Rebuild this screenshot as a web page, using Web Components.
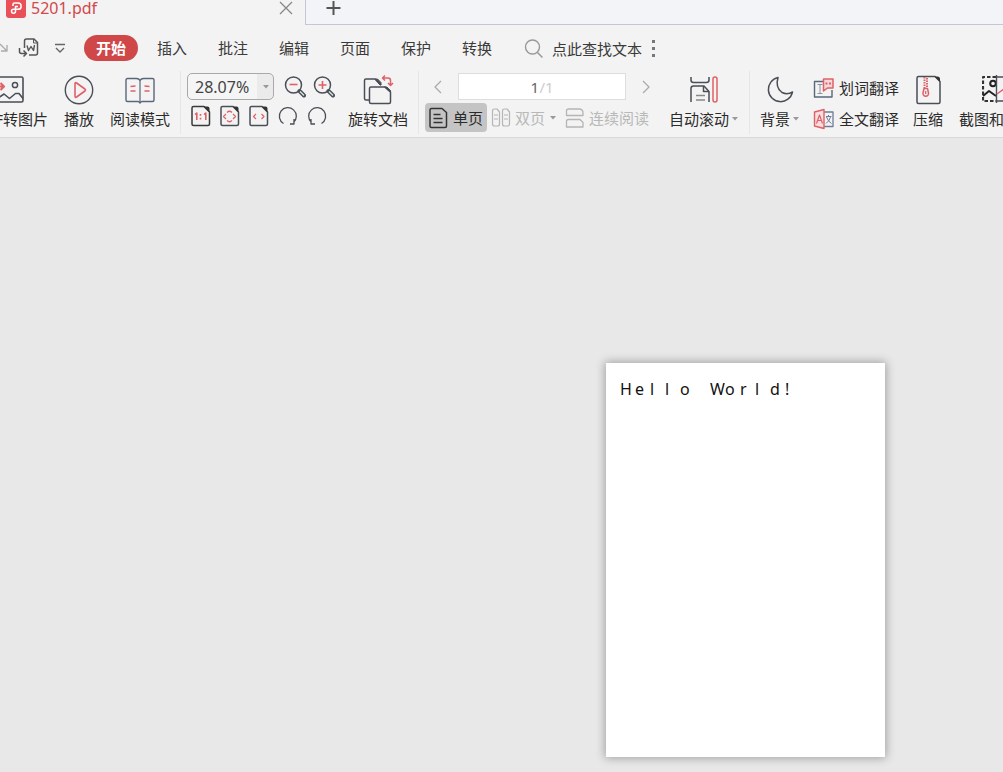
<!DOCTYPE html>
<html lang="zh-CN">
<head>
<meta charset="utf-8">
<title>5201.pdf</title>
<style>
  html, body { margin: 0; height: 100%; }
  body { font: 15px/20px "Noto Sans", "Noto Sans CJK SC", sans-serif; color: #2b2b2b; background: #e8e8e8; overflow: hidden; }
</style>
</head>
<body>
<pdf-app></pdf-app>
<script>
const INK = '#4a4f57', RED = '#df6168';
const page = (body, ink = INK) => [22, 22, `<path d="M2 3q0-1.500 1.500-1.500H14L19.500 7v12q0 1.500-1.500 1.500H3.500Q2 20.500 2 19z" stroke="${ink}" stroke-width="1.500"/><path d="M13.500 1.500h4q2 0 2 2V7.500z" fill="#333" stroke="none"/>${body}`];
const ICONS = {
  logo: [20, 20, `<rect width="20" height="20" rx="3" fill="#ea5057" stroke="none"/><path d="M7 8V6.500q0-1.500 1.500-1.500H12a3 3 0 0 1 0 6.300H7.500a2 2 0 1 0 2 2V8.500h2.500" stroke="#fff" stroke-width="1.500"/>`],
  close: [14, 14, `<path d="M1 1l12 12M13 1L1 13" stroke="#888" stroke-width="1.300"/>`],
  plus: [16, 16, `<path d="M7.500 1v14M.5 8h14" stroke="#555" stroke-width="2"/>`],
  share: [10, 12, `<path d="M0 2l7 7M7 3v6H1" stroke="#aaa" stroke-width="1.300"/>`],
  word: [22, 22, `<path d="M6.500 11V4q0-2 2-2H16l3.500 3.500V16q0 2-2 2H11" stroke="#555" stroke-width="1.500"/><path d="M15.500 2v4h4" stroke="#555"/><path d="M9 8.500l1.500 5 2.500-4 2.500 4L16.500 8" stroke="#555" stroke-width="1.400"/><path d="M1.500 11v3.500q0 2 2 2H8M5.500 13.500l3 3-3 3" stroke="#555" stroke-width="1.500"/>`],
  more: [12, 12, `<path d="M1 2.500h10M2 6l4 4 4-4" stroke="#666" stroke-width="1.400"/>`],
  search: [20, 20, `<circle cx="8.500" cy="8" r="7" stroke="#999" stroke-width="1.400"/><path d="M13.500 13.500l5 5" stroke="#999" stroke-width="1.500"/>`],
  dots: [4, 18, `<path d="M0 1h3v3H0zM0 8h3v3H0zM0 15h3v3H0z" fill="#777" stroke="none"/>`],
  caret: [8, 4, `<path d="M1 0h6L4 3.500z" fill="#999" stroke="none"/>`],
  image: [30, 30, `<rect x="1" y="2" width="25" height="25" rx="1.500" stroke-width="1.600"/><circle cx="18" cy="10" r="2.600" stroke-width="1.500"/><path d="M1 23l6-4 5.500 4.500 6-5 3.500 0 4 5" stroke-width="1.600"/><path d="M1 11.500h6M3.500 8l3.500 3.500L3.500 15" stroke="${RED}" stroke-width="2"/>`],
  play: [30, 30, `<circle cx="15" cy="15" r="13.700" stroke-width="1.400"/><path d="M11 9q0-2 1.600-1l8.300 6q1.200 1 0 2l-8.300 6q-1.600 1-1.600-1z" stroke="${RED}" stroke-width="1.600"/>`],
  book: [30, 30, `<path d="M15 5.500q-1-2-3.500-2H2.500q-1.500 0-1.500 1.500v20q0 1.500 1.500 1.500H13q1 0 2 1.500 1-1.500 2-1.500h10.500q1.500 0 1.500-1.500V5q0-1.500-1.500-1.500H18.500q-2.500 0-3.500 2z" stroke="#59677a" stroke-width="1.400"/><path d="M15 5.500v21.500" stroke="#59677a" stroke-width="1.200"/><path d="M5.500 11.500l5-.5M5.500 16h5M19.500 11l5 .5M19.500 16h5" stroke="${RED}" stroke-width="1.500"/>`],
  zoomout: [22, 22, `<circle cx="9.500" cy="9" r="8" stroke-width="1.500"/><path d="M5.500 8.500h8" stroke="${RED}" stroke-width="1.600"/><path d="M15.500 15l4.500 4.500" stroke-width="4" stroke-linecap="round"/><path d="M16 15.500l4 4" stroke="#e4e4e4" stroke-width="1.200"/>`],
  zoomin: [22, 22, `<circle cx="9.500" cy="9" r="8" stroke-width="1.500"/><path d="M5.500 9h8M9.500 5v8" stroke="${RED}" stroke-width="1.600"/><path d="M15.500 15l4.500 4.500" stroke-width="4" stroke-linecap="round"/><path d="M16 15.500l4 4" stroke="#e4e4e4" stroke-width="1.200"/>`],
  actual: page(`<path d="M5 9.500l1.800-1.500v7M14 9.500l1.800-1.500v7M10.500 9v1.800M10.500 12.800v1.800" stroke="${RED}" stroke-width="1.600"/>`, '#3a3a3a'),
  fitpage: page(`<path d="M8 7.500q2.500-2.500 5 0M8 15.500q2.500 2.500 5 0M7 9l-2.500 2.500L7 14M14 9l2.500 2.500L14 14" stroke="${RED}" stroke-width="1.200"/>`),
  fitwidth: page(`<path d="M8 9l-2.500 2.500L8 14M13.500 9l2.500 2.500-2.500 2.500" stroke="${RED}" stroke-width="1.200"/>`),
  cw: [22, 22, `<path d="M6.500 18.500A8.500 8.500 0 1 1 16.500 17.500M17 14v5h-4" stroke-width="1.300"/>`],
  ccw: [22, 22, `<path d="M15.500 18.500A8.500 8.500 0 1 0 5.500 17.500M5 14v5h4" stroke-width="1.300"/>`],
  rotate: [32, 30, `<path d="M7 25H4q-1.500 0-1.500-1.500v-18Q2.500 4 4 4h9l6 6" stroke-width="1.500"/><path d="M13 4h2.500L19 7.500V10h-1z" fill="${INK}"/><path d="M7.500 13.500q0-1.500 1.500-1.500h14l5.500 5V27q0 1.500-1.500 1.500H9q-1.500 0-1.500-1.500z" fill="#f3f3f3" stroke-width="1.500"/><path d="M22.500 12H25l3.500 3.500v2z" fill="${INK}"/><path d="M20.500 3H26q2.500 0 2.500 2.500v5M23 .5L20.500 3 23 5.500M26 8l2.500 2.500L31 8" stroke="${RED}" stroke-width="1.500"/>`],
  prev: [8, 14, `<path d="M7 1L1 7l6 6" stroke="#aaa" stroke-width="1.300"/>`],
  next: [8, 14, `<path d="M1 1l6 6-6 6" stroke="#aaa" stroke-width="1.300"/>`],
  single: [20, 22, `<path d="M1 3q0-1.500 1.500-1.500H13l4.500 4V19q0 1.500-1.500 1.500H2.500Q1 20.500 1 19z" stroke="#333" stroke-width="1.500"/><path d="M4.500 7.500h7M4.500 11.500h9M4.500 15.500h9" stroke="#333" stroke-width="1.400"/>`],
  double: [20, 22, `<path d="M1.500 4q0-2 2-2H6l2.500 3v12q0 2-2 2h-3q-2 0-2-2zM11.500 4q0-2 2-2h2.500L18.500 5v12q0 2-2 2h-3q-2 0-2-2zM3 8h4M3 12h4M13 8h4M13 12h4" stroke="#b5b5b5" stroke-width="1.200"/>`],
  scroll: [20, 22, `<path d="M1.500 8.500V4q0-2 2-2h10.500q4 0 4 4v2.500zM1.500 20v-5.500q0-2 2-2h11.500l3 3V20z" stroke="#b5b5b5" stroke-width="1.300"/>`],
  auto: [30, 30, `<path d="M2 2v3q0 2.500 2.500 2.500h13Q20 7.500 20 5V2M2 27V13.500Q2 11 4.500 11H15l5 5.500V27" stroke-width="1.500"/><path d="M14.500 11v5.500H20" stroke-width="1.500"/><path d="M7 20.500h9M7 25h9" stroke="#888" stroke-width="1.300"/><rect x="24" y="2" width="4" height="25" rx="2" stroke="${RED}" stroke-width="1.500"/>`],
  moon: [30, 30, `<path d="M13 2.500a12.200 12.200 0 1 0 14.500 14.500q-5 3-10.500.5-7-5-4-15z" stroke-width="1.500"/>`],
  wordtrans: [22, 22, `<path d="M11 4.500H1.500v15.500h17.500V13" stroke="#59677a" stroke-width="1.400"/><path d="M4.500 7.500h5M7 7.500v9M4.500 16.500h5" stroke="#8b94a0"/><path d="M10.500 2h9.500v9H14.500l-4 3z" fill="#f7d8d8" stroke="${RED}" stroke-width="1.500"/><path d="M12.500 6.500h2M16 6.500h2" stroke="${RED}" stroke-width="2"/>`],
  fulltrans: [22, 22, `<path d="M11 4h9v14.500h-9" stroke="#6f7d99" stroke-width="1.300"/><path d="M13 8.500h5.500M15.500 7v1.500M17.500 9q-1 4-4.500 6.500M13.500 9q1.500 4.500 5 6.500" stroke="#6f7d99"/><path d="M1.500 4L11 1.500v19L1.500 18z" fill="#f7dede" stroke="${RED}" stroke-width="1.400"/><path d="M3.500 15.500l3-8.500 3 8.500M4.500 12.500h4" stroke="${RED}" stroke-width="1.200"/>`],
  zip: [30, 30, `<path d="M4 3q0-1.500 1.500-1.500H22l5 5V27q0 1.500-1.500 1.500h-20Q4 28.500 4 27z" stroke-width="1.500"/><path d="M21.500 1.500h3q2.500 0 2.500 2.500v3z" fill="#333" stroke="none"/><path d="M11.500 2v11M14 3v11" stroke="${RED}" stroke-width="2" stroke-dasharray="1.500 1"/><path d="M11 13.500h3.500l1 4.500a2.800 2.800 0 1 1-5.500 0z" stroke="${RED}" stroke-width="1.500"/><path d="M12.700 16v3" stroke="${RED}" stroke-width="1.300"/>`],
  crop: [30, 30, `<path d="M14 2H1v24h14" stroke="#333" stroke-width="2.200" stroke-dasharray="3.500 2"/><path d="M1 21l6-5 7 5" stroke="#222" stroke-width="2"/><circle cx="11" cy="8.500" r="2.800" stroke="#222" stroke-width="2"/><path d="M14.500 0v28M15 2h14v24H15" stroke-width="1.400"/><path d="M15 19l7-5 7 5" stroke="${RED}" stroke-width="1.400"/>`],
};

function define(name, css, html) {
  customElements.define(name, class extends HTMLElement {
    constructor() {
      super();
      this.attachShadow({ mode: 'open' }).innerHTML =
        `<style>*{box-sizing:border-box}button{font:inherit;color:inherit;background:none;border:0;padding:0;margin:0;white-space:nowrap}${css}</style>${html}`;
    }
  });
}

customElements.define('ui-icon', class extends HTMLElement {
  connectedCallback() {
    const [w, h, body] = ICONS[this.getAttribute('name')];
    this.attachShadow({ mode: 'open' }).innerHTML =
      `<style>:host{display:block;flex:none}svg{display:block}</style><svg width="${w}" height="${h}" viewBox="0 0 ${w} ${h}" fill="none" stroke="${INK}" stroke-linejoin="round" aria-hidden="true">${body}</svg>`;
  }
});

define('ribbon-button', `
  :host { display: block; flex: none; }
  button { display: flex; flex-direction: column; align-items: center; gap: 4px; padding: 0 8px; }
  .label { display: flex; align-items: center; gap: 2px; }`,
  `<button type="button"><slot name="icon"></slot><span class="label"><slot></slot></span></button>`);

define('line-button', `
  :host { display: block; flex: none; }
  button { display: flex; align-items: center; gap: 4px; height: var(--line-height, 29px); }
  :host([active]) button { background: #c4c4c4; border-radius: 4px; padding: 0 4px; }
  :host([muted]) { color: #b8b8b8; }`,
  `<button type="button"><slot name="icon"></slot><slot></slot></button>`);

define('icon-button', `
  :host { display: block; flex: none; }
  button { display: block; }`,
  `<button type="button"><slot></slot></button>`);

define('ribbon-group', `
  :host { display: flex; min-width: 0; border-right: 1px solid #e6e6e6; }
  :host([last]) { border: 0; padding-left: 2px; }
  :host([end]) { justify-content: flex-end; padding-right: 2px; }`,
  `<slot></slot>`);

define('tab-bar', `
  :host { display: flex; height: 25px; background: #f3f3f3; }
  .tab { display: flex; align-items: center; width: 305px; padding: 0 12px 9px 6px; gap: 5px; color: #d2484b; font-size: 16px; }
  .name { flex: 1; }
  .rest { flex: 1; display: flex; padding: 0 20px; border: solid #c3c7d6; border-width: 0 0 1px 1px; background: #f3f4f8; }`,
  `<div class="tab"><ui-icon name="logo"></ui-icon><span class="name">5201.pdf</span>
   <icon-button><ui-icon name="close"></ui-icon></icon-button></div>
   <div class="rest"><icon-button><ui-icon name="plus"></ui-icon></icon-button></div>`);

define('menu-bar', `
  :host { display: flex; align-items: center; height: 46px; background: #f3f3f3; color: #3a3a3a; }
  .quick { display: flex; align-items: center; width: 84px; flex: none; }
  .quick > :nth-child(2) { margin: 0 14px 0 8px; }
  nav { display: flex; align-items: center; gap: 31px; }
  nav button:first-child { height: 26px; padding: 0 12px; margin-right: -12px; border-radius: 13px; background: #cf4748; color: #fff; font-weight: 700; }
  .search { display: flex; align-items: center; gap: 8px; margin: 2px 10px 0 32px; }`,
  `<div class="quick"><icon-button><ui-icon name="share"></ui-icon></icon-button><icon-button><ui-icon name="word"></ui-icon></icon-button><icon-button><ui-icon name="more"></ui-icon></icon-button></div>
   <nav>${['开始', '插入', '批注', '编辑', '页面', '保护', '转换'].map(t => `<button type="button">${t}</button>`).join('')}</nav>
   <button type="button" class="search"><ui-icon name="search"></ui-icon><span>点此查找文本</span></button>
   <icon-button><ui-icon name="dots"></ui-icon></icon-button>`);

define('zoom-tools', `
  :host { display: grid; gap: 5px; align-content: start; margin: -2px 5px 0 6px; flex: none; }
  .row { display: flex; align-items: center; gap: 7px; }
  .icons { padding-left: 3px; }
  .zoom { display: grid; margin-right: 3px; width: 87px; }
  select, .arrow { grid-area: 1 / 1; }
  select { appearance: none; font: inherit; color: #444; height: 27px; width: 100%; padding: 0 8px 0 7px; border: 1px solid #a9a9a9; border-radius: 5px; background: linear-gradient(90deg, #f5f5f5 69px, #ebebeb 69px); font-size: 16px; }
  .arrow { justify-self: end; align-self: center; margin-right: 4px; pointer-events: none; }`,
  `<div class="row"><span class="zoom"><select aria-label="缩放"><option>28.07%</option></select><ui-icon class="arrow" name="caret"></ui-icon></span>
   <icon-button><ui-icon name="zoomout"></ui-icon></icon-button><icon-button><ui-icon name="zoomin"></ui-icon></icon-button></div>
   <div class="row icons">${['actual', 'fitpage', 'fitwidth', 'cw', 'ccw'].map(n => `<icon-button><ui-icon name="${n}"></ui-icon></icon-button>`).join('')}</div>`);

define('page-tools', `
  :host { display: grid; gap: 3px; align-content: start; margin: -2px 3px 0 6px; width: 233px; flex: none; }
  .row { display: flex; align-items: center; }
  .pager { gap: 16px; padding-left: 9px; }
  .modes { gap: 4px; }
  .modes > :last-child { margin-left: 4px; }
  label { display: flex; justify-content: center; align-items: center; width: 168px; height: 27px; border: 1px solid #ddd; background: #fff; color: #ccc; }
  input { width: 9px; padding: 0; border: 0; outline: 0; background: none; font: inherit; color: #666; }`,
  `<div class="row pager"><icon-button><ui-icon name="prev"></ui-icon></icon-button>
   <label><input value="1" aria-label="页码"><span>/1</span></label>
   <icon-button><ui-icon name="next"></ui-icon></icon-button></div>
   <div class="row modes"><line-button active><ui-icon slot="icon" name="single"></ui-icon>单页</line-button>
   <line-button muted><ui-icon slot="icon" name="double"></ui-icon>双页<ui-icon name="caret"></ui-icon></line-button>
   <line-button muted><ui-icon slot="icon" name="scroll"></ui-icon>连续阅读</line-button></div>`);

const big = (icon, label, caret) => `<ribbon-button><ui-icon slot="icon" name="${icon}"></ui-icon>${label}${caret ? '<ui-icon name="caret"></ui-icon>' : ''}</ribbon-button>`;
define('ribbon-bar', `
  :host { display: grid; grid-template-columns: 181px 238px 331px 1fr; height: 67px; padding-bottom: 4px; box-sizing: border-box; background: #f3f3f3; border-bottom: 1px solid #d8d8d8; overflow: hidden; }
  ribbon-group { padding-top: 4px; }
  .stack { --line-height: 31px; display: grid; align-content: start; margin: -3px 6px 0 5px; flex: none; }`,
  `<ribbon-group end>${big('image', 'PDF转图片')}${big('play', '播放')}${big('book', '阅读模式')}</ribbon-group>
   <ribbon-group><zoom-tools></zoom-tools>${big('rotate', '旋转文档')}</ribbon-group>
   <ribbon-group><page-tools></page-tools>${big('auto', '自动滚动', true)}</ribbon-group>
   <ribbon-group last>${big('moon', '背景', true)}
     <div class="stack"><line-button><ui-icon slot="icon" name="wordtrans"></ui-icon>划词翻译</line-button><line-button><ui-icon slot="icon" name="fulltrans"></ui-icon>全文翻译</line-button></div>
     ${big('zip', '压缩')}${big('crop', '截图和对比')}</ribbon-group>`);

define('page-viewer', `
  :host { display: flex; justify-content: flex-end; flex: 1; box-sizing: border-box; padding: 225px 118px 15px; background: #e8e8e8; }
  article { width: 279px; padding: 16px 14px; background: #fff; box-shadow: 0 0 9px 1px rgba(0,0,0,.32); }
  p { margin: 0; font-size: 16px; color: #111; white-space: nowrap; }
  span { display: inline-block; width: 15px; white-space: pre; }`,
  `<article><p>${[...'Hello World!'].map(c => `<span>${c}</span>`).join('')}</p></article>`);

define('pdf-app', `:host { display: flex; flex-direction: column; height: 100vh; }`,
  `<tab-bar></tab-bar><menu-bar></menu-bar><ribbon-bar></ribbon-bar><page-viewer></page-viewer>`);
</script>
</body>
</html>
